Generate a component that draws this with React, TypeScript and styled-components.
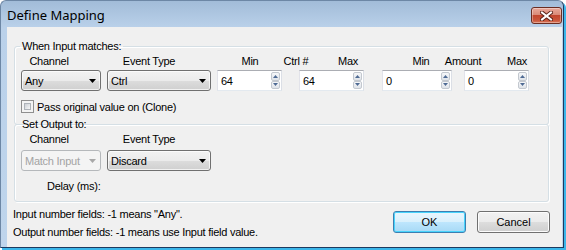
import styled, { createGlobalStyle } from 'styled-components'

const GlobalStyle = createGlobalStyle`
  html, body { margin: 0; padding: 0; background: #ffffff; }
  body {
    font-family: "Liberation Sans", Arial, sans-serif;
    font-size: 11px;
    letter-spacing: -0.25px;
    color: #000;
  }
`

type Cap = { text: string; dx: number }

const inputCaps: Cap[] = [
  { text: 'Channel', dx: 28 },
  { text: 'Event Type', dx: 100 },
  { text: 'Min', dx: 101 },
  { text: 'Ctrl #', dx: 46 },
  { text: 'Max', dx: 52 },
  { text: 'Min', dx: 73 },
  { text: 'Amount', dx: 42 },
  { text: 'Max', dx: 54 },
]

const outputCaps: Cap[] = [
  { text: 'Channel', dx: 28 },
  { text: 'Event Type', dx: 100 },
]

const spins = [
  { value: '64', w: 65, ml: 6 },
  { value: '64', w: 65, ml: 17 },
  { value: '0', w: 70, ml: 18 },
  { value: '0', w: 65, ml: 12 },
]

function Arrow({ disabled }: { disabled?: boolean }) {
  return (
    <svg width="7" height="4" viewBox="0 0 7 4">
      <path d="M0 0h7L3.5 4z" fill={disabled ? '#a8a8a8' : '#000'} />
    </svg>
  )
}

function SpinArrow({ up }: { up?: boolean }) {
  return (
    <svg width="5" height="3" viewBox="0 0 5 3">
      <path d={up ? 'M0 3h5L2.5 0z' : 'M0 0h5L2.5 3z'} fill="#4e6a93" />
    </svg>
  )
}

function App() {
  return (
    <Screen>
      <GlobalStyle />
      <Window>
        <TitleBar>
          <Title>Define Mapping</Title>
          <CloseButton>
            <svg width="13" height="10" viewBox="0 0 13 10">
              <path d="M2 1.5l9 7M11 1.5l-9 7" stroke="#5a2218" strokeWidth="4" strokeLinecap="square" />
              <path d="M2 1.5l9 7M11 1.5l-9 7" stroke="#fff" strokeWidth="2" strokeLinecap="square" />
            </svg>
          </CloseButton>
        </TitleBar>

        <Body>
          <Group $pb={11}>
            <Legend>When Input matches:</Legend>
            <CaptionRow>
              {inputCaps.map((c, i) => (
                <Caption key={i} $dx={c.dx}>{c.text}</Caption>
              ))}
            </CaptionRow>
            <ControlRow $mt={2}>
              <Combo $w={80}>
                <span>Any</span>
                <Arrow />
              </Combo>
              <Combo $w={104} $ml={6}>
                <span>Ctrl</span>
                <Arrow />
              </Combo>
              {spins.map((s, i) => (
                <Spin key={i} $w={s.w} $ml={s.ml}>
                  <span>{s.value}</span>
                  <SpinButtons>
                    <SpinHalf><SpinArrow up /></SpinHalf>
                    <SpinHalf><SpinArrow /></SpinHalf>
                  </SpinButtons>
                </Spin>
              ))}
            </ControlRow>
            <CheckRow>
              <CheckBox><CheckInner /></CheckBox>
              <span>Pass original value on (Clone)</span>
            </CheckRow>
          </Group>

          <Group $pb={8} $mt={-7}>
            <Legend>Set Output to:</Legend>
            <CaptionRow>
              {outputCaps.map((c, i) => (
                <Caption key={i} $dx={c.dx}>{c.text}</Caption>
              ))}
            </CaptionRow>
            <ControlRow $mt={4}>
              <Combo $w={80} $disabled>
                <span>Match Input</span>
                <Arrow disabled />
              </Combo>
              <Combo $w={104} $ml={6}>
                <span>Discard</span>
                <Arrow />
              </Combo>
            </ControlRow>
            <DelayLabel>Delay (ms):</DelayLabel>
          </Group>

          <Footer>
            <Notes>
              <div>Input number fields: -1 means "Any".</div>
              <div>Output number fields: -1 means use Input field value.</div>
            </Notes>
            <Buttons>
              <Button $primary>OK</Button>
              <Button>Cancel</Button>
            </Buttons>
          </Footer>
        </Body>
      </Window>
    </Screen>
  )
}

const Screen = styled.div`
  width: 566px;
  height: 250px;
  overflow: hidden;
`
const Window = styled.div`
  box-sizing: border-box;
  width: 564px;
  height: 248px;
  border: 1px solid #6d87a5;
  border-right-color: #1d3a5f;
  border-bottom-color: #1d3a5f;
  border-radius: 6px 6px 0 0;
  background: linear-gradient(#a2bcd8, #bad1ea 27px, #bfd5ec);
  box-shadow: 2px 2px 0 #3bb6ea;
  display: flex;
  flex-direction: column;
`
const TitleBar = styled.div`
  height: 26px;
  flex: none;
  display: flex;
  align-items: flex-start;
  justify-content: space-between;
  padding-left: 6px;
  padding-right: 1px;
`
const Title = styled.span`
  font-family: "Noto Sans", "Open Sans", sans-serif;
  font-size: 13px;
  letter-spacing: 0;
  line-height: 16px;
  margin-top: 6px;
`
const CloseButton = styled.div`
  box-sizing: border-box;
  width: 31px;
  height: 17px;
  margin-top: 6px;
  border: 1px solid #6b2d22;
  border-radius: 3px;
  background: linear-gradient(#e9a99b 0%, #d98a78 45%, #c2462e 50%, #c9553b 80%, #d9775a 100%);
  box-shadow: inset 0 0 0 1px rgba(255, 255, 255, 0.35);
  display: flex;
  align-items: center;
  justify-content: center;
`
const Body = styled.div`
  flex: 1;
  margin: 0 1px 0 6px;
  background: #f0f0f0;
  padding: 13px 13px 0 7px;
  display: flex;
  flex-direction: column;
`
const Group = styled.fieldset<{ $pb: number; $mt?: number }>`
  margin: ${p => p.$mt ?? 0}px 0 0 0;
  min-width: 0;
  padding: 0 0 ${p => p.$pb}px 6px;
  border: 1px solid #d5dfe5;
  border-radius: 3px;
  box-shadow: inset 1px 1px 0 #fff, 1px 1px 0 #fff;
  display: flex;
  flex-direction: column;
`
const Legend = styled.legend`
  padding: 0 2px;
  margin-left: -1px;
  line-height: 13px;
`
const CaptionRow = styled.div`
  display: flex;
  height: 14px;
  line-height: 14px;
  margin-top: 1px;
`
const Caption = styled.span<{ $dx: number }>`
  width: 0;
  margin-left: ${p => p.$dx}px;
  display: flex;
  justify-content: center;
  white-space: nowrap;
`
const ControlRow = styled.div<{ $mt: number }>`
  display: flex;
  margin-top: ${p => p.$mt}px;
`
const Combo = styled.div<{ $w: number; $ml?: number; $disabled?: boolean }>`
  box-sizing: border-box;
  width: ${p => p.$w}px;
  height: 21px;
  margin-left: ${p => p.$ml ?? 0}px;
  border: 1px solid ${p => (p.$disabled ? '#b5b8bb' : '#707070')};
  border-radius: 3px;
  background: ${p =>
    p.$disabled
      ? '#f4f4f4'
      : 'linear-gradient(#f2f2f2 0%, #ebebeb 50%, #dddddd 50%, #cfcfcf 100%)'};
  box-shadow: inset 0 0 0 1px ${p => (p.$disabled ? '#f4f4f4' : 'rgba(255,255,255,0.7)')};
  color: ${p => (p.$disabled ? '#a3a3a3' : '#000')};
  display: flex;
  align-items: center;
  justify-content: space-between;
  padding: 0 4px 0 3px;
  white-space: nowrap;
`
const Spin = styled.div<{ $w: number; $ml: number }>`
  box-sizing: border-box;
  width: ${p => p.$w}px;
  height: 21px;
  margin-left: ${p => p.$ml}px;
  border: 1px solid;
  border-color: #abadb3 #dbdfe6 #e3e9ef #e2e3ea;
  background: #fff;
  display: flex;
  align-items: center;
  justify-content: space-between;
  padding: 1px 1px 1px 3px;
`
const SpinButtons = styled.div`
  width: 9px;
  height: 17px;
  display: flex;
  flex-direction: column;
`
const SpinHalf = styled.div`
  box-sizing: border-box;
  flex: 1;
  border: 1px solid #c3c8cf;
  border-radius: 2px;
  background: linear-gradient(#f6f7f9, #dfe3e9);
  display: flex;
  align-items: center;
  justify-content: center;
`
const CheckRow = styled.label`
  display: flex;
  align-items: center;
  gap: 3px;
  height: 13px;
  margin-top: 9px;
`
const CheckBox = styled.span`
  box-sizing: border-box;
  width: 13px;
  height: 13px;
  border: 1px solid #8f8f8f;
  background: #f4f4f4;
  padding: 2px;
  display: flex;
`
const CheckInner = styled.span`
  flex: 1;
  border: 1px solid #aeb3b9;
  background: linear-gradient(135deg, #cbcfd5, #f7f7f7);
`
const DelayLabel = styled.div`
  margin: 8px 0 0 26px;
  height: 14px;
  line-height: 14px;
`
const Footer = styled.div`
  display: flex;
  justify-content: space-between;
  margin: 3px -1px 0 -1px;
`
const Notes = styled.div`
  line-height: 18px;
`
const Buttons = styled.div`
  display: flex;
  gap: 11px;
  margin-top: 6px;
`
const Button = styled.button<{ $primary?: boolean }>`
  box-sizing: border-box;
  width: 73px;
  height: 22px;
  padding: 0;
  font: inherit;
  color: #000;
  border: 1px solid ${p => (p.$primary ? '#3c7fb1' : '#707070')};
  border-radius: 3px;
  background: ${p =>
    p.$primary
      ? 'linear-gradient(#eaf6fd 0%, #d9f0fc 50%, #bee6fd 50%, #a7d9f5 100%)'
      : 'linear-gradient(#f2f2f2 0%, #ebebeb 50%, #dddddd 50%, #cfcfcf 100%)'};
  box-shadow: inset 0 0 0 1px ${p => (p.$primary ? '#48d4fc' : '#fcfcfc')};
`

export default App
